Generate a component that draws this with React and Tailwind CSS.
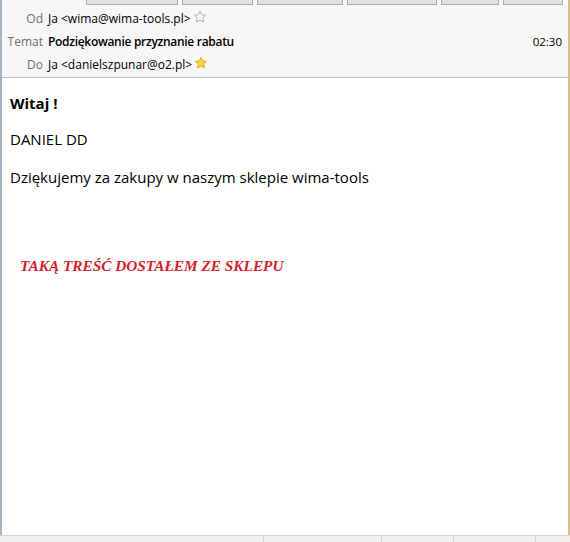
import { useState } from "react";

function Star({ filled }) {
    return (
        <svg width="14" height="14" viewBox="0 0 24 24" className="ml-[2px] -mt-[3px]">
            <path
                d="M12 2l3 6.3 6.8.9-5 4.7 1.3 6.8L12 17.4l-6.1 3.3 1.3-6.8-5-4.7 6.8-.9z"
                fill={filled ? "#f9d24a" : "none"}
                stroke={filled ? "#e2a91a" : "#a6a6a6"}
                strokeWidth="1.5"
                strokeLinejoin="round"
            />
        </svg>
    );
}

function HeaderRow({ label, children, right }) {
    return (
        <div className="flex items-center h-[23px]">
            <div className="w-[41px] text-right text-[#6f6f6f] pr-[5px] box-content">{label}</div>
            <div className="flex items-center flex-1 text-black">{children}</div>
            {right && <div className="pr-[6px] text-black text-[11.5px]">{right}</div>}
        </div>
    );
}

export default function App() {
    const [starred] = useState(true);

    return (
        <div className="w-[570px] h-[542px] flex flex-col bg-white overflow-hidden" style={{ fontFamily: '"Open Sans", "Noto Sans", sans-serif' }}>
            <div className="flex flex-1 min-h-0">
                <div className="flex-1 flex flex-col border-l-2 border-l-[#a9b4c2] border-r-2 border-r-[#d9bf8a]">
                    {/* Header */}
                    <div className="bg-[#f7f7f7] border-b border-[#c3c3c3] h-[78px] flex flex-col text-[12px]">
                        {/* toolbar button bottoms */}
                        <div className="flex h-[6px]">
                            <div className="w-[84px]" />
                            <div className="w-[92px] h-[5px] bg-[#e1e1e1] border border-t-0 border-[#adadad]" />
                            <div className="w-[4px]" />
                            <div className="w-[71px] h-[5px] bg-[#e1e1e1] border border-t-0 border-[#adadad]" />
                            <div className="w-[4px]" />
                            <div className="w-[86px] h-[5px] bg-[#e1e1e1] border border-t-0 border-[#adadad]" />
                            <div className="w-[4px]" />
                            <div className="w-[90px] h-[5px] bg-[#e1e1e1] border border-t-0 border-[#adadad]" />
                            <div className="w-[4px]" />
                            <div className="w-[58px] h-[5px] bg-[#e1e1e1] border border-t-0 border-[#adadad]" />
                            <div className="w-[4px]" />
                            <div className="w-[60px] h-[5px] bg-[#e1e1e1] border border-t-0 border-[#adadad]" />
                        </div>
                        <div className="flex flex-col pt-[1px]">
                            <HeaderRow label="Od">
                                <span>Ja &lt;wima@wima-tools.pl&gt;</span>
                                <Star filled={false} />
                            </HeaderRow>
                            <HeaderRow label="Temat" right="02:30">
                                <span className="font-semibold tracking-[-0.3px]">Podziękowanie przyznanie rabatu</span>
                            </HeaderRow>
                            <HeaderRow label="Do">
                                <span>Ja &lt;danielszpunar@o2.pl&gt;</span>
                                <Star filled={starred} />
                            </HeaderRow>
                        </div>
                    </div>

                    {/* Body */}
                    <div className="flex-1 px-[8px] pt-[14px] text-[15px] text-black">
                        <p className="font-bold">Witaj !</p>
                        <p className="mt-[13px]">DANIEL DD</p>
                        <p className="mt-[16px]">Dziękujemy za zakupy w naszym sklepie wima-tools</p>
                        <p
                            className="mt-[66px] ml-[10px] text-[15.3px] font-bold italic text-[#d7222c]"
                            style={{ fontFamily: '"Liberation Serif", "DejaVu Serif", serif' }}
                        >
                            TAKĄ TREŚĆ DOSTAŁEM ZE SKLEPU
                        </p>
                    </div>
                </div>
            </div>

            {/* Status bar */}
            <div className="h-[7px] bg-[#f0f0f0] border-t border-[#d7d7d7] flex">
                <div className="w-[263px]" />
                <div className="w-[118px] border-l border-[#d7d7d7]" />
                <div className="w-[72px] border-l border-[#d7d7d7]" />
                <div className="w-[82px] border-l border-[#d7d7d7]" />
                <div className="flex-1 border-l border-[#d7d7d7]" />
            </div>
        </div>
    );
}
